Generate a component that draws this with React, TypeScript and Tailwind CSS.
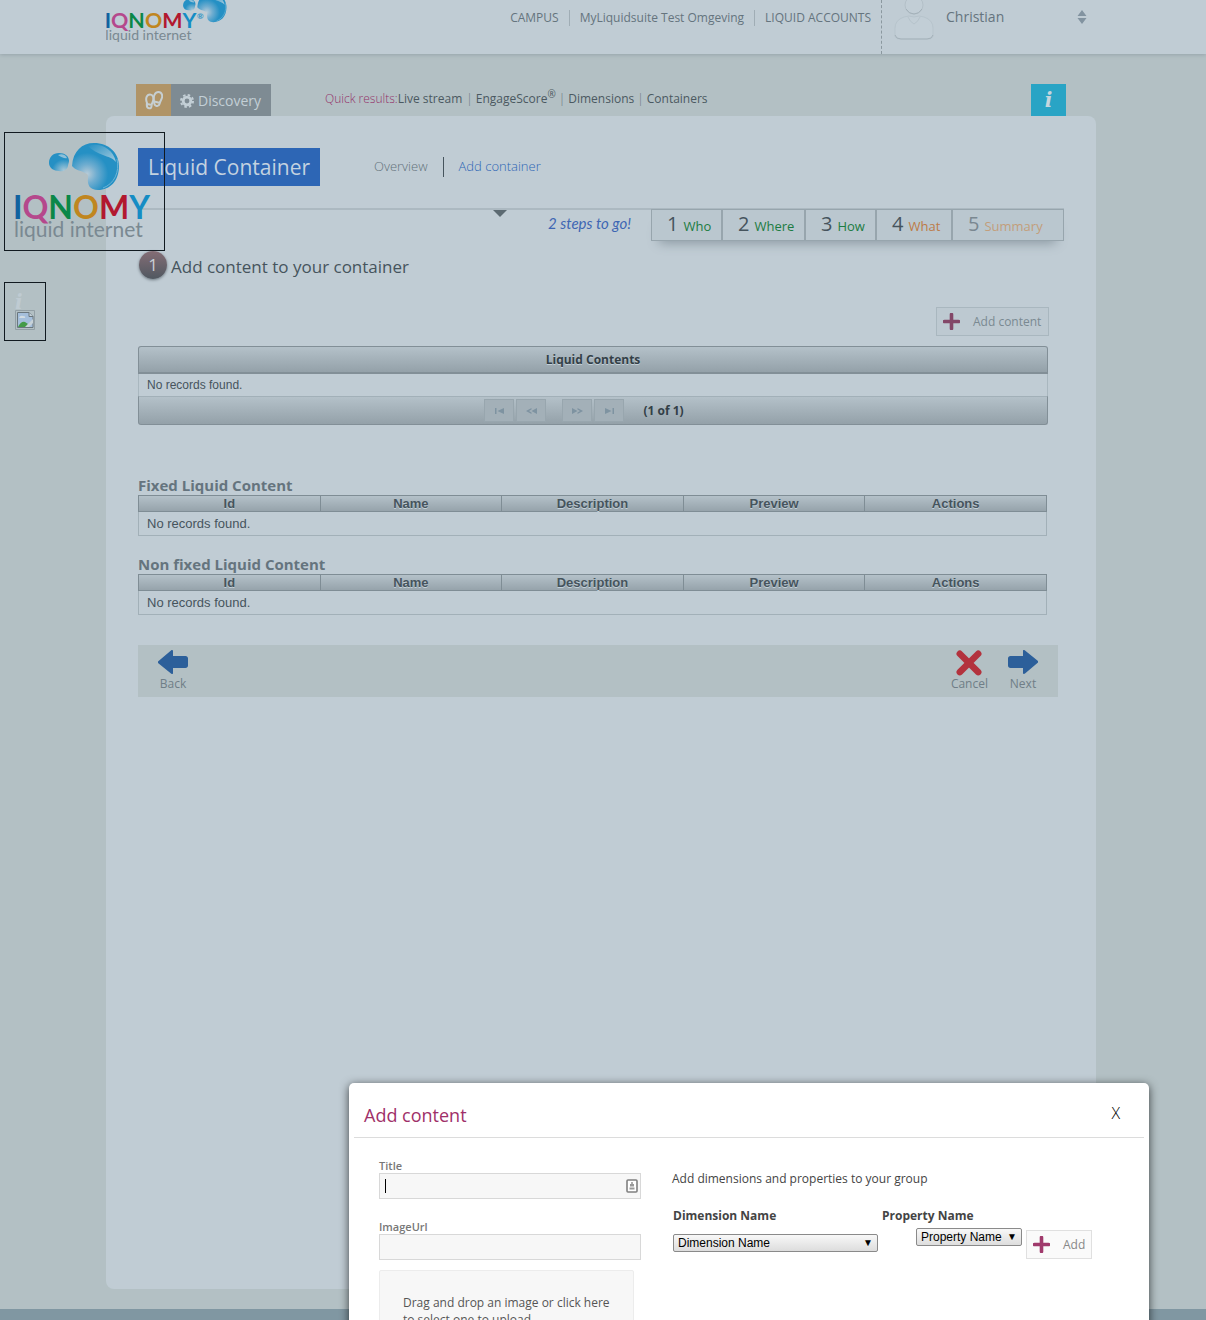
import React from "react";

function Drops({ id }: { id: string }) {
  return (
    <g>
      <defs>
        <radialGradient id={id} cx="0.32" cy="0.66" r="0.45">
          <stop offset="0" stopColor="#b9ccd8" />
          <stop offset="0.45" stopColor="#6fadd0" />
          <stop offset="1" stopColor="#2590c4" />
        </radialGradient>
        <radialGradient id={id + "s"} cx="0.75" cy="0.95" r="0.6">
          <stop offset="0" stopColor="#a9c8d8" />
          <stop offset="1" stopColor="#2590c4" />
        </radialGradient>
        <linearGradient id={id + "h"} x1="0" y1="0" x2="1" y2="1">
          <stop offset="0" stopColor="#2590c4" />
          <stop offset="1" stopColor="#a6cbdd" />
        </linearGradient>
      </defs>
      <path
        d="M34 20c0-6 4-10 10-10 6 0 10 3 10 8 0 2-1 3-1 5-1 4-5 6-9 5-5 0-10-3-10-8z"
        fill={"url(#" + id + "s)"}
      />
      <path d="M43 12c4-2 8 0 9 3-2 1-6-1-9-3z" fill="#8dc0d9" />
      <path
        d="M57 23C58 8 67 0 79 0c15 0 25 10 25 23 0 15-9 24-21 24-8 0-11-5-10-12 0-3 0-4-3-5-5-3-9-2-13-7z"
        fill={"url(#" + id + ")"}
      />
      <path d="M73 3c11-4 25 2 28 16-3-4-8-5-13-7-6-2-11-5-15-9z" fill={"url(#" + id + "h)"} />
      <path d="M102 16c3 13-3 25-14 29" fill="none" stroke="#6db4d6" strokeWidth="1" />
    </g>
  );
}

function LogoWords() {
  return (
    <>
      <text x="-2" y="76" fontFamily="Lato, sans-serif" fontSize="32" fontWeight="700">
        <tspan fill="#11629f">I</tspan>
        <tspan fill="#b5488c">Q</tspan>
        <tspan fill="#0b8748">N</tspan>
        <tspan fill="#c0861f">O</tspan>
        <tspan fill="#b2182f">M</tspan>
        <tspan fill="#158cc4">Y</tspan>
      </text>
      <text x="-1" y="94" fontFamily="Lato, sans-serif" fontSize="21" fill="#7a8992">
        liquid internet
      </text>
    </>
  );
}

function Plus() {
  return (
    <svg width="17" height="17" viewBox="0 0 17 17" aria-hidden="true">
      <path d="M8.500 1.500v14M1.500 8.500h14" stroke="currentColor" strokeWidth="3.600" strokeLinecap="round" />
    </svg>
  );
}

function Arrow({ flip = false }: { flip?: boolean }) {
  return (
    <svg width="30" height="24" viewBox="0 0 30 24" className={flip ? "rotate-180" : ""} aria-hidden="true">
      <path
        d="M0 11.500 13 .5c1-.8 2-.4 2 .8V6h12.500C29 6 30 7 30 8.500v7c0 1.500-1 2.500-2.500 2.500H15v5c0 1.200-1 1.400-2 .6L0 13z"
        fill="#2c5f9a"
      />
    </svg>
  );
}

const steps = [
  { n: 1, label: "Who", w: "w-[71px]", c: "text-[#1c7c43]", d: "text-[#46545d]" },
  { n: 2, label: "Where", w: "w-[83px]", c: "text-[#1c7c43]", d: "text-[#46545d]" },
  { n: 3, label: "How", w: "w-[71px]", c: "text-[#1c7c43]", d: "text-[#46545d]" },
  { n: 4, label: "What", w: "w-[76px]", c: "text-[#bd7b48]", d: "text-[#46545d]" },
  { n: 5, label: "Summary", w: "w-[112px]", c: "text-[#c39e7b]", d: "text-[#7a8891]" },
];

const columns = ["Id", "Name", "Description", "Preview", "Actions"];

function ContentTable({ title }: { title: string }) {
  return (
    <section>
      <h3 className="h-5 text-[15px] leading-5 font-bold text-[#65747e]">{title}</h3>
      <table className="w-full table-fixed border-collapse font-['Liberation_Sans',sans-serif] text-[13px]">
        <thead>
          <tr className="bg-linear-to-b from-[#b4c1c9] to-[#94a1a9]">
            {columns.map((c) => (
              <th
                key={c}
                className="h-4 border border-[#7f8d95] p-0 leading-[15px] font-bold text-[#46545d] [text-shadow:0_1px_0_#c3d0d8]"
              >
                {c}
              </th>
            ))}
          </tr>
        </thead>
        <tbody>
          <tr>
            <td colSpan={5} className="h-6 border border-[#a2b0b8] px-2 py-0 leading-5 text-[#46545d]">
              No records found.
            </td>
          </tr>
        </tbody>
      </table>
    </section>
  );
}

const pagers = [
  { label: "First page", d: "M1 1v6h1.500V1zM10 1v6L3.500 4z", gap: "" },
  { label: "Previous page", d: "M11 1v6L5.500 4zM5.500 1 0 4l5.500 3V5.500L3 4l2.500-1.500z", gap: "mr-[14px]" },
  { label: "Next page", d: "M0 1v6l5.500-3zM5.500 1 11 4 5.500 7V5.500L8 4 5.500 2.500z", gap: "" },
  { label: "Last page", d: "M1 1v6l6.500-3zM8.500 1v6H10V1z", gap: "" },
];

function Header() {
  return (
    <header className="relative z-10 h-[54px] bg-[#c0ccd4] shadow-[0_1px_4px_#96a3aa]">
      <div className="flex h-full overflow-hidden pr-[119px] pl-[106px]">
        <a href="#home" aria-label="IQNOMY liquid internet">
          <svg width="130" height="44" viewBox="0 0 130 44" className="block">
            <g transform="translate(56 -7) scale(.62)">
              <Drops id="small" />
            </g>
            <g transform="translate(0 -23) scale(.67)">
              <LogoWords />
            </g>
            <text x="91" y="19" fontFamily="Lato, sans-serif" fontSize="8" fontWeight="700" fill="#2590c4">
              ®
            </text>
          </svg>
        </a>
        <nav className="ml-auto flex items-start text-xs leading-4 text-[#65747e]">
          <a href="#campus" className="mt-[10px] pr-[10px]">CAMPUS</a>
          <a href="#suite" className="mt-[10px] border-x border-[#a0adb5] px-[10px]">MyLiquidsuite Test Omgeving</a>
          <a href="#accounts" className="mt-[10px] px-[10px]">LIQUID ACCOUNTS</a>
        </nav>
        <div className="flex w-[206px] border-l border-dashed border-[#8b989f] pl-3">
          <svg width="40" height="42" viewBox="0 0 40 42" aria-hidden="true">
            <path d="M1 35V28q0-8 9-11l5-1q5 2 10 0l5 1q9 3 9 11v7q0 4-5 4H6q-5 0-5-4z" fill="#c2ced6" stroke="#b7c4cc" />
            <path d="M14 17q2 5 6 7q4-2 6-7" fill="none" stroke="#b6c3cb" />
            <circle cx="20" cy="5" r="9" fill="#c2ced6" stroke="#b3c0c8" />
            <path d="M12 9q3 5 8 5t8-5" fill="none" stroke="#a4b1b9" />
            <path d="M1 35q1 4 6 4h26q5 0 6-4" fill="none" stroke="#a4b1b9" />
          </svg>
          <button type="button" className="mt-[7px] ml-3 flex h-5 flex-1 items-center justify-between text-sm text-[#65747e]">
            Christian
            <svg width="10" height="14" viewBox="0 0 10 14" aria-hidden="true">
              <path d="M5 0l4.500 6h-9zM.5 8h9L5 14z" fill="#8293a0" />
            </svg>
          </button>
        </div>
      </div>
    </header>
  );
}

function Toolbar() {
  return (
    <div className="flex h-[62px] items-end px-[30px]">
      <button type="button" aria-label="Journey" className="flex h-8 w-[35px] items-center justify-center bg-[#b09467]">
        <svg width="18" height="19" viewBox="0 0 18 19" fill="none" stroke="#c6cfd2" strokeWidth="2" aria-hidden="true">
          <path d="M2 12C0 7 2 3.500 5 3.500S9 7 8 10c-.6 2-1.500 3-1.500 5 0 1.800-1 2.600-2.500 2.300S1.500 15 2 12zM2 13l5 1" />
          <path d="M9 10c-1-5 1-9 4.500-9S18 5 16.500 8c-1 2-1.500 3-2 5-.5 1.800-1.500 2.300-3 2S9 13 9 10zM9.500 10.500l5.500 1.500" />
        </svg>
      </button>
      <button type="button" className="flex h-8 w-[100px] items-center gap-1 bg-[#7e8b93] pt-px pl-[9px] text-sm text-[#c3cfd6]">
        <svg width="14" height="14" viewBox="0 0 14 14" aria-hidden="true">
          <g fill="none" stroke="#c3cfd6">
            <circle cx="7" cy="7" r="3.800" strokeWidth="2.800" />
            <circle cx="7" cy="7" r="6" strokeWidth="2" strokeDasharray="2.500 2.210" />
          </g>
        </svg>
        Discovery
      </button>
      <div className="mb-[7px] ml-[54px] flex h-5 items-center text-xs text-[#4b5961]">
        <span className="font-light text-[#94326a]">Quick results:</span>
        <a href="#live">Live stream</a>
        <span className="pr-[3px] pl-1 font-light text-[#64737b]">|</span>
        <a href="#score">EngageScore<sup className="text-[10px]">®</sup></a>
        <span className="px-[3px] font-light text-[#64737b]">|</span>
        <a href="#dimensions">Dimensions</a>
        <span className="px-[3px] font-light text-[#64737b]">|</span>
        <a href="#containers">Containers</a>
      </div>
      <button
        type="button"
        aria-label="Info"
        className="ml-auto h-8 w-[35px] bg-[#29a4c5] font-['DejaVu_Serif',serif] text-xl leading-8 font-bold text-[#c6d6de] italic"
      >
        i
      </button>
    </div>
  );
}

function AddContentDialog() {
  const field = "block h-[26px] w-full border border-[#d8d8d8] bg-[#f7f7f7] px-[6px] text-xs outline-none";
  const select =
    "h-[18px] w-full appearance-none rounded-[2px] border border-[#8a8a8a] bg-linear-to-b from-[#f8f8f8] to-[#dddddd] px-1 font-['Liberation_Sans',sans-serif] text-xs leading-[14px] text-black";
  const caret = "pointer-events-none absolute top-0 right-[5px] text-[10px] leading-[17px] text-black";
  return (
    <div
      role="dialog"
      aria-labelledby="dlg"
      className="absolute top-[1083px] left-[349px] w-[800px] rounded-[5px] bg-white px-[5px] pb-10 shadow-[0_2px_10px_#000000b0]"
    >
      <div className="flex h-[55px] items-center justify-between border-b border-[#dcdcdc] pt-[9px] pr-6 pl-[10px]">
        <h2 id="dlg" className="text-lg text-[#9f3069]">Add content</h2>
        <button type="button" aria-label="Close" className="mb-[3px] text-base font-light text-black">X</button>
      </div>
      <div className="flex pr-[52px] pl-[25px] text-xs text-[#444]">
        <div className="w-[262px] shrink-0 pt-5">
          <label htmlFor="title" className="block h-[15px] text-[11px] leading-4 font-semibold text-[#777]">Title</label>
          <div className="relative">
            <input id="title" className={field} />
            <span className="absolute top-[6px] left-[6px] h-[14px] w-px bg-black" />
            <svg width="12" height="14" viewBox="0 0 12 14" className="absolute top-[6px] right-[3px]" aria-hidden="true">
              <rect x="1" y="1" width="10" height="12" rx="1" fill="#fff" stroke="#808080" strokeWidth="1.600" />
              <path d="M5.200 3h1.600v2H8v2.500H4V5h1.200zM3.500 8.500h5v2h-5z" fill="#999" />
            </svg>
          </div>
          <label htmlFor="image" className="mt-5 block h-[15px] text-[11px] leading-4 font-semibold text-[#777]">ImageUrl</label>
          <input id="image" className={field} />
          <button
            type="button"
            className="mt-[10px] block h-[82px] w-[255px] rounded-[2px] border border-[#ececec] bg-[#f7f7f7] pr-5 pl-[23px] text-left leading-[17px] text-[#555]"
          >
            Drag and drop an image or click here to select one to upload
          </button>
        </div>
        <div className="min-w-0 flex-1 pt-8 pl-[31px]">
          <p className="leading-[18px]">Add dimensions and properties to your group</p>
          <div className="mt-5 flex">
            <div className="w-[209px] pl-px">
              <label htmlFor="dim" className="block leading-4 font-bold">Dimension Name</label>
              <div className="relative mt-[10px] w-[205px]">
                <select id="dim" className={select}>
                  <option>Dimension Name</option>
                </select>
                <span className={caret}>▼</span>
              </div>
            </div>
            <div className="pl-px">
              <label htmlFor="prop" className="block leading-4 font-bold">Property Name</label>
              <div className="mt-1 flex items-start gap-1 pl-[34px]">
                <div className="relative w-[106px]">
                  <select id="prop" className={select}>
                    <option>Property Name</option>
                  </select>
                  <span className={caret}>▼</span>
                </div>
                <button
                  type="button"
                  className="mt-[2px] flex h-[29px] w-[66px] items-center gap-[13px] border border-[#e0e0e0] bg-[#fafafa] pl-[6px] text-[#888]"
                >
                  <span className="text-[#a03a6c]"><Plus /></span>
                  Add
                </button>
              </div>
            </div>
          </div>
        </div>
      </div>
    </div>
  );
}

export default function App() {
  return (
    <div className="relative flex min-h-screen flex-col overflow-hidden bg-[#b3c0c4] font-['Open_Sans',sans-serif] text-[#46545d]">
      <Header />
      <div className="flex flex-1 flex-col pr-[110px] pb-5 pl-[106px]">
        <Toolbar />
        <main className="min-h-[1173px] flex-1 rounded-lg bg-[#c0ccd4] px-8 pt-8">
          <div className="flex h-[38px] items-center">
            <h1 className="flex h-full w-[182px] items-center bg-[#2d66b5] pt-px pl-[10px] text-[21px] whitespace-nowrap text-[#c3d2e0]">
              Liquid Container
            </h1>
            <nav className="ml-[54px] flex items-center text-[13px] font-light">
              <a href="#overview" className="pr-[15px] text-[#63727b]">Overview</a>
              <a href="#add" className="border-l border-[#46545d] pl-[15px] text-[#2d66b5]">Add container</a>
            </nav>
          </div>

          <div className="mt-[22px] flex h-[34px] items-start border-t-2 border-[#acb9c1]">
            <svg width="14" height="7" viewBox="0 0 14 7" className="ml-[355px]" aria-hidden="true">
              <path d="M0 0h14L7 7z" fill="#5c6a72" />
            </svg>
            <span className="ml-auto pt-[3px] pr-5 font-['Lato',sans-serif] text-[15px] leading-5 text-[#3e66b3] italic">
              2 steps to go!
            </span>
            <ol className="-mt-px flex h-8 border border-[#97a5ad] bg-[#bac7cf] shadow-[0_10px_12px_-8px_#8997a0]">
              {steps.map((s) => (
                <li key={s.n} className={s.w + " border-r-2 border-[#97a5ad] last:-mr-0.5 last:border-r-0"}>
                  <a href={"#step" + s.n} className="flex h-full items-baseline gap-[5px] pl-[15px]">
                    <span className={"text-xl leading-7 " + s.d}>{s.n}</span>
                    <span className={"text-[13px] font-medium " + s.c}>{s.label}</span>
                  </a>
                </li>
              ))}
            </ol>
          </div>

          <h2 className="mt-[9px] flex h-8 items-center gap-1 pl-px text-[17px]">
            <span className="mb-1 flex size-7 items-center justify-center rounded-full bg-linear-to-b from-[#846d75] to-[#505861] text-[17px] text-[#c8d0d6] shadow-[0_1px_3px_#6c7880]">
              1
            </span>
            Add content to your container
          </h2>

          <div className="mt-6 flex justify-end pr-[15px]">
            <button type="button" className="flex h-[29px] w-[113px] items-center gap-[13px] border border-[#a9b7bf] bg-[#bdc9d1] pl-[6px] text-xs whitespace-nowrap text-[#7a8992]">
              <span className="text-[#834768]"><Plus /></span>
              Add content
            </button>
          </div>

          <div className="mt-[10px] mr-4 text-xs">
            <table className="w-full border-separate border-spacing-0">
              <thead>
                <tr>
                  <th className="h-[28px] rounded-t-[3px] border border-b-2 border-[#828f97] bg-linear-to-b from-[#b4c1c9] to-[#94a1a9] p-0 leading-4 font-bold text-[#333f47] [text-shadow:0_1px_0_#c3d0d8]">
                    Liquid Contents
                  </th>
                </tr>
              </thead>
              <tbody>
                <tr>
                  <td className="h-[22px] border-x border-[#a9b7bf] px-2 py-0 font-['Liberation_Sans',sans-serif] leading-4">No records found.</td>
                </tr>
              </tbody>
            </table>
            <div className="flex h-[29px] items-center justify-center gap-[2px] rounded-b-[3px] border border-[#828f97] border-t-[#a2b0b8] bg-linear-to-b from-[#b4c1c9] to-[#94a1a9] pr-[18px]">
              {pagers.map((p) => (
                <button
                  key={p.label}
                  type="button"
                  aria-label={p.label}
                  className={"flex h-[23px] w-[30px] items-center justify-center border border-[#98a6ae] bg-[#a3b0b8] " + p.gap}
                >
                  <svg width="11" height="8" viewBox="0 0 11 8" aria-hidden="true">
                    <path d={p.d} fill="#7e93a1" />
                  </svg>
                </button>
              ))}
              <span className="ml-[17px] font-bold text-[#333f47]">(1 of 1)</span>
            </div>
          </div>

          <div className="mt-[50px] mr-[17px] flex flex-col gap-[18px]">
            <ContentTable title="Fixed Liquid Content" />
            <ContentTable title="Non fixed Liquid Content" />
          </div>

          <div className="mt-[30px] mr-[6px] flex h-[52px] items-start gap-5 bg-[#b3c0c4] px-5 pt-[5px] text-xs leading-4 text-[#6f7e87]">
            <button type="button" className="mr-auto flex flex-col items-center gap-[2px]">
              <Arrow />
              Back
            </button>
            <button type="button" className="flex flex-col items-center gap-[2px]">
              <svg width="28" height="24" viewBox="0 0 28 26" className="overflow-visible" aria-hidden="true">
                <path d="M4 4l20 20M24 4 4 24" stroke="#b3323d" strokeWidth="7" strokeLinecap="round" />
              </svg>
              Cancel
            </button>
            <button type="button" className="flex flex-col items-center gap-[2px]">
              <Arrow flip />
              Next
            </button>
          </div>
        </main>
      </div>
      <footer className="h-[11px] bg-[#8097a2]" />

      <div className="absolute top-[132px] left-1 h-[119px] w-[161px] border border-[#111a20] p-[10px]">
        <svg width="139" height="97" viewBox="0 0 139 97" className="overflow-visible" aria-label="IQNOMY liquid internet">
          <Drops id="large" />
          <LogoWords />
        </svg>
      </div>
      <div className="absolute top-[282px] left-1 h-[59px] w-[42px] border border-[#111a20] px-[10px] pt-[7px]">
        <div className="h-5 font-['DejaVu_Serif',serif] text-xl leading-6 font-bold text-[#bfcbd2] italic">i</div>
        <svg width="20" height="20" viewBox="0 0 20 20" aria-hidden="true">
          <path d="M.5.5h19v19H.5z" fill="none" stroke="#929fa5" />
          <path d="M2.500 2.500H14l4 4v11H2.500z" fill="#a5bfdb" stroke="#6a777e" />
          <path d="M14 2.500v4h4" fill="#c7d2d8" stroke="#6a777e" />
          <path d="M4 8q1-3 4-2 3 0 2 2z" fill="#d1dce2" />
          <path d="M3 17q3-6 7-5l3 2-2 3z" fill="#449b48" />
          <path d="M10 17l8-8v4l-4 4z" fill="#c7d2d8" />
        </svg>
      </div>

      <AddContentDialog />
    </div>
  );
}
